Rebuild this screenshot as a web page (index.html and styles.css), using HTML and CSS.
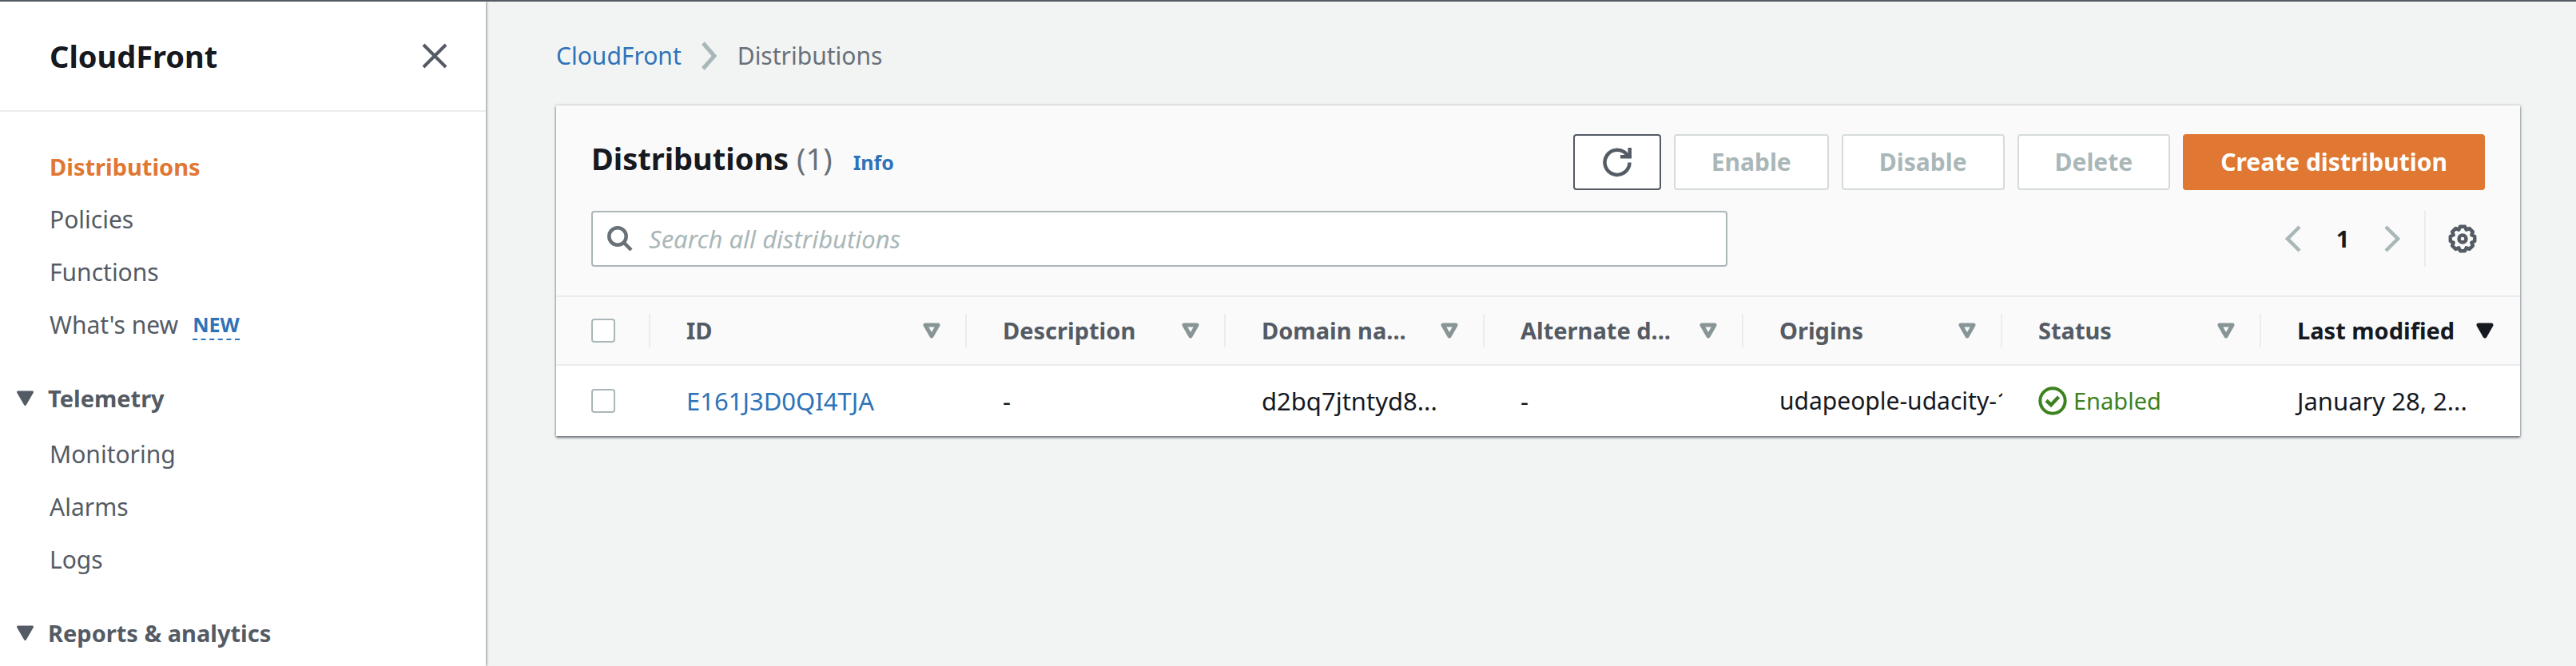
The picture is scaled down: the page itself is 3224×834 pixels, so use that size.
FILE: index.html
```html
<!DOCTYPE html>
<html lang="en">
<head>
<meta charset="utf-8">
<title>CloudFront</title>
<link rel="stylesheet" href="styles.css">
</head>
<body>
<div class="app">
  <aside class="sidebar">
    <header class="sidebar-header">
      <h2 class="sidebar-title">CloudFront</h2>
      <button class="icon-button" type="button" aria-label="Close navigation">
        <svg width="32" height="32" viewBox="0 0 32 32" fill="none" stroke="#545b64" stroke-width="4"><path d="M2 2 30 30M30 2 2 30"/></svg>
      </button>
    </header>
    <nav class="nav">
      <ul class="nav-list">
        <li><a class="nav-link active" href="#">Distributions</a></li>
        <li><a class="nav-link" href="#">Policies</a></li>
        <li><a class="nav-link" href="#">Functions</a></li>
        <li><a class="nav-link" href="#">What's new</a><a class="nav-new" href="#">NEW</a></li>
      </ul>
      <button class="nav-section" type="button"><svg width="24" height="20" viewBox="0 0 24 20" fill="#545b64" stroke="#545b64" stroke-width="3" stroke-linejoin="round"><path d="M2.500 2h18L11.500 17.500z"/></svg>Telemetry</button>
      <ul class="nav-list">
        <li><a class="nav-link" href="#">Monitoring</a></li>
        <li><a class="nav-link" href="#">Alarms</a></li>
        <li><a class="nav-link" href="#">Logs</a></li>
      </ul>
      <button class="nav-section" type="button"><svg width="24" height="20" viewBox="0 0 24 20" fill="#545b64" stroke="#545b64" stroke-width="3" stroke-linejoin="round"><path d="M2.500 2h18L11.500 17.500z"/></svg>Reports &amp; analytics</button>
    </nav>
  </aside>

  <main class="main">
    <nav class="breadcrumb" aria-label="Breadcrumb">
      <a class="link" href="#">CloudFront</a>
      <svg width="20" height="36" viewBox="0 0 20 36" fill="none" stroke="#aab7b8" stroke-width="5"><path d="M2 2 16 18 2 34"/></svg>
      <span>Distributions</span>
    </nav>

    <section class="panel">
      <div class="panel-header">
        <div class="title-row">
          <h1 class="panel-title">Distributions <span class="count">(1)</span><a class="info" href="#">Info</a></h1>
          <div class="actions">
            <button class="button refresh" type="button" aria-label="Refresh">
              <svg width="38" height="38" viewBox="0 0 38 38" fill="none" stroke="#545b64" stroke-width="4.500"><path d="M34.500 19.500A15.500 15.500 0 1 1 31 9.500L34 13"/><path d="M34.700 1v13.500M37 12.300H23"/><path d="M26 6l9-1v8h-7z" stroke="none"/></svg>
            </button>
            <button class="button" type="button" disabled>Enable</button>
            <button class="button" type="button" disabled>Disable</button>
            <button class="button" type="button" disabled>Delete</button>
            <button class="button primary" type="button">Create distribution</button>
          </div>
        </div>
        <div class="filter-row">
          <label class="search">
            <svg width="32" height="32" viewBox="0 0 32 32" fill="none" stroke="#687078" stroke-width="4.500"><circle cx="13" cy="13" r="10.700"/><path d="M21 21l9 9"/></svg>
            <input class="search-input" type="text" placeholder="Search all distributions" aria-label="Search all distributions">
          </label>
          <div class="pager">
            <button class="icon-button" type="button" aria-label="Previous page"><svg width="20" height="34" viewBox="0 0 20 34" fill="none" stroke="#aab7b8" stroke-width="4.500"><path d="M18 2 3 17 18 32"/></svg></button>
            <button class="page" type="button">1</button>
            <button class="icon-button" type="button" aria-label="Next page"><svg width="20" height="34" viewBox="0 0 20 34" fill="none" stroke="#aab7b8" stroke-width="4.500"><path d="M2 2 17 17 2 32"/></svg></button>
            <span class="pager-divider"></span>
            <button class="icon-button" type="button" aria-label="Preferences"><svg width="36" height="36" viewBox="0 0 36 36" fill="none" stroke="#545b64" stroke-width="4.500" stroke-linejoin="round"><path d="M33.200 15 33.200 21 29.300 22.700 30.900 26.600 26.600 30.900 22.700 29.300 21 33.200 15 33.200 13.300 29.300 9.400 30.900 5.100 26.600 6.700 22.700 2.800 21 2.800 15 6.700 13.300 5.100 9.400 9.400 5.100 13.300 6.700 15 2.800 21 2.800 22.700 6.700 26.600 5.100 30.900 9.400 29.300 13.300z"/><circle cx="18" cy="18" r="4.500"/></svg></button>
          </div>
        </div>
      </div>

      <table class="table">
        <colgroup><col class="col-check"><col class="col-id"><col><col><col><col><col><col></colgroup>
        <thead>
          <tr>
            <th><div class="cell check"><input class="checkbox" type="checkbox" aria-label="Select all"></div></th>
            <th><div class="cell">ID<svg class="sort" viewBox="0 0 22 20"><path d="M3 3h16L11 17z"/></svg></div></th>
            <th><div class="cell">Description<svg class="sort" viewBox="0 0 22 20"><path d="M3 3h16L11 17z"/></svg></div></th>
            <th><div class="cell">Domain na...<svg class="sort" viewBox="0 0 22 20"><path d="M3 3h16L11 17z"/></svg></div></th>
            <th><div class="cell">Alternate d...<svg class="sort" viewBox="0 0 22 20"><path d="M3 3h16L11 17z"/></svg></div></th>
            <th><div class="cell">Origins<svg class="sort" viewBox="0 0 22 20"><path d="M3 3h16L11 17z"/></svg></div></th>
            <th><div class="cell">Status<svg class="sort" viewBox="0 0 22 20"><path d="M3 3h16L11 17z"/></svg></div></th>
            <th class="sorted"><div class="cell">Last modified<svg class="sort" viewBox="0 0 22 20"><path d="M3 3h16L11 17z"/></svg></div></th>
          </tr>
        </thead>
        <tbody>
          <tr>
            <td class="select"><input class="checkbox" type="checkbox" aria-label="Select E161J3D0QI4TJA"></td>
            <td><a class="link" href="#">E161J3D0QI4TJA</a></td>
            <td>-</td>
            <td>d2bq7jtntyd8...</td>
            <td>-</td>
            <td class="origin">udapeople-udacity-1</td>
            <td><span class="status"><svg width="36" height="36" viewBox="0 0 36 36" fill="none" stroke="#3d8120" stroke-width="4"><circle cx="18" cy="18" r="15.700"/><path d="M10 17.500l6 5.500 9.500-10" stroke-width="4.500"/></svg>Enabled</span></td>
            <td>January 28, 2...</td>
          </tr>
        </tbody>
      </table>
    </section>
  </main>
</div>
</body>
</html>
```
FILE: styles.css
```css
* { box-sizing: border-box; }

body {
  margin: 0;
  background: #f2f3f3;
  color: #16191f;
  font-family: "Noto Sans", "Open Sans", sans-serif;
  font-size: 30px;
  line-height: 44px;
}

button, input { font: inherit; color: inherit; }
button { margin: 0; }
h1, h2, ul { margin: 0; padding: 0; }
ul { list-style: none; }
svg { display: block; flex: none; }
a { text-decoration: none; }

.link { color: #2e73b8; }

.app {
  display: flex;
  height: 100vh;
  overflow: hidden;
  border-top: 2px solid #545b64;
}

.sidebar {
  flex: none;
  width: 608px;
  background: #fff;
  box-shadow: 1px 0 3px #879196;
}

.sidebar-header {
  display: flex;
  align-items: center;
  justify-content: space-between;
  height: 138px;
  padding: 0 48px 0 62px;
  border-bottom: 2px solid #eaeded;
}

.sidebar-title {
  font-size: 38px;
  font-weight: 700;
}

.icon-button {
  padding: 0;
  border: 0;
  background: none;
}

.nav { padding-top: 47px; }

.nav-list {
  display: grid;
  gap: 22px;
  padding: 0 62px;
}

.nav-list li {
  display: flex;
  align-items: center;
  gap: 18px;
}

.nav-link { color: #545b64; }

.nav-link.active {
  color: #e07732;
  font-size: 29px;
  font-weight: 700;
}

.nav-new {
  border-bottom: 2px dashed #2e73b8;
  color: #2e73b8;
  font-size: 25px;
  font-weight: 700;
  line-height: 36px;
}

.nav-section {
  display: flex;
  align-items: center;
  gap: 16px;
  margin: 48px 0 26px;
  padding: 0 20px;
  border: 0;
  background: none;
  color: #545b64;
  font-size: 29px;
  font-weight: 700;
}

.main {
  flex: 1;
  min-width: 0;
  padding: 46px 70px 0 88px;
}

.breadcrumb {
  display: flex;
  align-items: center;
  gap: 25px;
  margin-bottom: 40px;
  color: #687078;
}

.panel {
  background: #fff;
  box-shadow: 0 2px 3px #687078, 0 0 3px #aab7b8;
}

.panel-header {
  padding: 36px 44px;
  border-bottom: 2px solid #eaeded;
  background: #fafafa;
}

.title-row, .filter-row {
  display: flex;
  align-items: center;
  justify-content: space-between;
}

.title-row { margin-bottom: 26px; }

.panel-title {
  padding-bottom: 6px;
  font-size: 38px;
  font-weight: 700;
}

.count {
  color: #687078;
  font-weight: 400;
}

.info {
  margin-left: 26px;
  color: #2e73b8;
  font-size: 25px;
}

.actions {
  display: flex;
  gap: 16px;
}

.button {
  height: 70px;
  padding: 0 45px;
  border: 2px solid #d5dbdb;
  border-radius: 4px;
  background: #fff;
  color: #aab7b8;
  font-weight: 700;
}

.refresh {
  padding: 0 34px;
  border-color: #545b64;
}

.primary {
  border-color: #e07732;
  background: #e07732;
  color: #fff;
}

.search {
  display: flex;
  align-items: center;
  gap: 20px;
  width: 60%;
  height: 70px;
  padding: 0 18px;
  border: 2px solid #aab7b8;
  border-radius: 4px;
  background: #fff;
}

.search-input {
  flex: 1;
  min-width: 0;
  padding: 0;
  border: 0;
  outline: 0;
  background: none;
  font-size: 31px;
}

.search-input::placeholder {
  color: #aab7b8;
  font-style: italic;
  opacity: 1;
}

.pager {
  display: flex;
  align-items: center;
  padding-right: 10px;
}

.page {
  width: 104px;
  padding: 0;
  border: 0;
  background: none;
  font-size: 29px;
  font-weight: 700;
}

.pager-divider {
  width: 2px;
  height: 70px;
  margin: 0 28px 0 30px;
  background: #eaeded;
}

.table {
  width: 100%;
  border-collapse: separate;
  border-spacing: 0;
  table-layout: fixed;
}

.col-check { width: 118px; }
.col-id { width: 396px; }

.table th {
  height: 86px;
  padding: 0;
  border-bottom: 2px solid #eaeded;
  background: #fafafa;
  color: #545b64;
  font-size: 29px;
  text-align: left;
}

.table .sorted { color: #16191f; }

.cell {
  display: flex;
  align-items: center;
  justify-content: space-between;
  height: 42px;
  padding: 0 31px 0 45px;
  border-right: 2px solid #eaeded;
  white-space: nowrap;
}

.sorted .cell { border-color: transparent; }
.cell.check { padding: 0 0 0 44px; }

.sort {
  width: 22px;
  height: 20px;
  fill: none;
  stroke: #879596;
  stroke-width: 5;
  stroke-linejoin: round;
}

.sorted .sort {
  fill: #16191f;
  stroke: #16191f;
}

.table td {
  height: 88px;
  padding: 0 0 0 45px;
  overflow: hidden;
  font-size: 31px;
  white-space: nowrap;
}

.table .origin { font-size: 30px; }
.table .select { padding-left: 44px; }

.checkbox {
  display: block;
  width: 30px;
  height: 30px;
  margin: 0;
  border: 2px solid #aab7b8;
  border-radius: 4px;
  background: #fff;
  appearance: none;
}

.status {
  display: flex;
  align-items: center;
  gap: 8px;
  color: #3d8120;
  font-size: 29px;
}
```
